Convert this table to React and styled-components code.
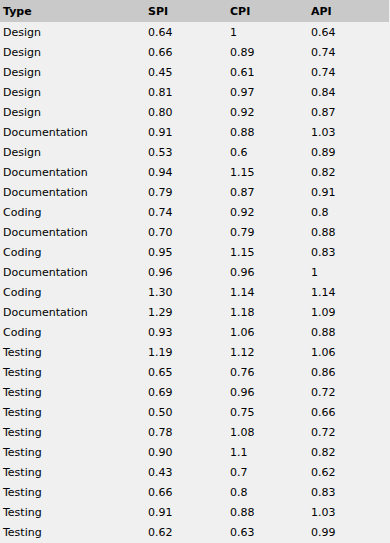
import React from 'react'
import styled, { createGlobalStyle } from 'styled-components';

const GlobalStyle = createGlobalStyle`
    body {
        margin: 0;
        background: #f0f0f0;
        font-family: "DejaVu Sans", Verdana, sans-serif;
    }
`;

const Table = styled.table`
    width: 389px;
    table-layout: fixed;
    border-collapse: collapse;
    background: #f0f0f0;
    font-size: 11px;
    color: #000;
`;
const HeadCell = styled.th`
    height: 22px;
    padding: 0 0 0 ${p => p.$pad}px;
    background: #c9c9c9;
    text-align: left;
    font-weight: bold;
    width: ${p => p.$w}px;
`;
const Cell = styled.td`
    height: 20px;
    padding: 0 0 0 ${p => p.$pad}px;
    white-space: nowrap;
`;

const rows = [
    ['Design', '0.64', '1', '0.64'],
    ['Design', '0.66', '0.89', '0.74'],
    ['Design', '0.45', '0.61', '0.74'],
    ['Design', '0.81', '0.97', '0.84'],
    ['Design', '0.80', '0.92', '0.87'],
    ['Documentation', '0.91', '0.88', '1.03'],
    ['Design', '0.53', '0.6', '0.89'],
    ['Documentation', '0.94', '1.15', '0.82'],
    ['Documentation', '0.79', '0.87', '0.91'],
    ['Coding', '0.74', '0.92', '0.8'],
    ['Documentation', '0.70', '0.79', '0.88'],
    ['Coding', '0.95', '1.15', '0.83'],
    ['Documentation', '0.96', '0.96', '1'],
    ['Coding', '1.30', '1.14', '1.14'],
    ['Documentation', '1.29', '1.18', '1.09'],
    ['Coding', '0.93', '1.06', '0.88'],
    ['Testing', '1.19', '1.12', '1.06'],
    ['Testing', '0.65', '0.76', '0.86'],
    ['Testing', '0.69', '0.96', '0.72'],
    ['Testing', '0.50', '0.75', '0.66'],
    ['Testing', '0.78', '1.08', '0.72'],
    ['Testing', '0.90', '1.1', '0.82'],
    ['Testing', '0.43', '0.7', '0.62'],
    ['Testing', '0.66', '0.8', '0.83'],
    ['Testing', '0.91', '0.88', '1.03'],
    ['Testing', '0.62', '0.63', '0.99'],
];

const cols = [
    { label: 'Type', w: 145, pad: 3 },
    { label: 'SPI', w: 82, pad: 0 },
    { label: 'CPI', w: 81, pad: 0 },
    { label: 'API', w: 78, pad: 0 },
];

const App = () => {
  return (
    <>
      <GlobalStyle />
      <Table>
        <thead>
          <tr>
            {cols.map(c => (
              <HeadCell key={c.label} $w={c.w} $pad={c.pad}>{c.label}</HeadCell>
            ))}
          </tr>
        </thead>
        <tbody>
          {rows.map((r, i) => (
            <tr key={i}>
              {r.map((v, j) => (
                <Cell key={j} $pad={cols[j].pad}>{v}</Cell>
              ))}
            </tr>
          ))}
        </tbody>
      </Table>
    </>
  )
}

export default App
